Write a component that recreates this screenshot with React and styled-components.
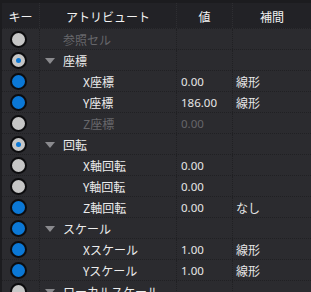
import React from 'react';
import styled, { createGlobalStyle } from 'styled-components';

const GlobalStyle = createGlobalStyle`
	html, body {
		margin: 0;
		padding: 0;
		background: #2b2b2f;
		overflow: hidden;
	}
	body {
		font-family: "Noto Sans CJK JP", "Noto Sans", sans-serif;
		font-size: 12px;
		color: #e6e6e6;
	}
`;

const rows = [
	{ key: 'off', label: '参照セル', level: 0, disabled: true },
	{ key: 'mixed', label: '座標', level: 0, group: true },
	{ key: 'on', label: 'X座標', level: 1, value: '0.00', interp: '線形' },
	{ key: 'on', label: 'Y座標', level: 1, value: '186.00', interp: '線形' },
	{ key: 'off', label: 'Z座標', level: 1, value: '0.00', disabled: true },
	{ key: 'mixed', label: '回転', level: 0, group: true },
	{ key: 'off', label: 'X軸回転', level: 1, value: '0.00' },
	{ key: 'off', label: 'Y軸回転', level: 1, value: '0.00' },
	{ key: 'on', label: 'Z軸回転', level: 1, value: '0.00', interp: 'なし' },
	{ key: 'on', label: 'スケール', level: 0, group: true },
	{ key: 'on', label: 'Xスケール', level: 1, value: '1.00', interp: '線形' },
	{ key: 'on', label: 'Yスケール', level: 1, value: '1.00', interp: '線形' },
	{ key: 'off', label: 'ローカルスケール', level: 0, group: true },
];

export default function App() {
	return (
		<Panel>
			<GlobalStyle />
			<HeaderRow>
				<HeadCell>キー</HeadCell>
				<HeadCell>アトリビュート</HeadCell>
				<HeadCell>値</HeadCell>
				<HeadCell>補間</HeadCell>
			</HeaderRow>
			{rows.map((r, i) => (
				<Row key={i}>
					<KeyCell>
						<KeyDot state={r.key} />
					</KeyCell>
					<AttrCell level={r.level}>
						{r.group ? <Caret /> : <CaretSpace />}
						<Label disabled={r.disabled}>{r.label}</Label>
					</AttrCell>
					<ValueCell disabled={r.disabled}>{r.value}</ValueCell>
					<InterpCell>{r.interp}</InterpCell>
				</Row>
			))}
		</Panel>
	);
}

const Panel = styled.div`
	width: 309px;
	height: 289px;
	border-top: 3px solid #1c1c1f;
	border-left: 2px solid #1c1c1f;
	background: #2b2b2f;
	overflow: hidden;
`;

const Grid = styled.div`
	display: grid;
	grid-template-columns: 38px 137px 56px 78px;
`;

const HeaderRow = styled(Grid)`
	height: 25px;
	background: #222226;
`;

const HeadCell = styled.div`
	display: flex;
	align-items: center;
	justify-content: center;
	color: #f2f2f2;
	padding-top: 1px;
	border-right: 1px dotted #2e2e32;

	&:last-child {
		border-right: none;
	}
`;

const Row = styled(Grid)`
	height: 21px;
	box-sizing: border-box;
	border-top: 1px dotted #202023;
`;

const Cell = styled.div`
	display: flex;
	align-items: center;
	border-right: 1px dotted #202023;
	white-space: nowrap;
	overflow: hidden;
`;

const KeyCell = styled(Cell)`
	justify-content: flex-start;
	padding-left: 8px;
`;

const KeyDot = styled.span`
	box-sizing: border-box;
	width: 17px;
	height: 17px;
	border-radius: 50%;
	border: 2px solid #0c0c0e;
	background: ${p => (p.state === 'on' ? '#0b78d6' : '#c6c6c6')};
	position: relative;

	&::after {
		content: '';
		display: ${p => (p.state === 'mixed' ? 'block' : 'none')};
		position: absolute;
		left: 50%;
		top: 50%;
		width: 5px;
		height: 5px;
		margin: -2.5px 0 0 -2.5px;
		border-radius: 50%;
		background: #0b78d6;
	}
`;

const AttrCell = styled(Cell)`
	padding-left: ${p => (p.level === 1 ? 25 : 5)}px;
`;

const Caret = styled.span`
	flex: none;
	width: 0;
	height: 0;
	border-left: 5px solid transparent;
	border-right: 5px solid transparent;
	border-top: 6px solid #8a8a8e;
	margin-right: 8px;
	margin-top: 1px;
`;

const CaretSpace = styled.span`
	flex: none;
	width: 18px;
`;

const Label = styled.span`
	color: ${p => (p.disabled ? '#67676b' : '#ececec')};
`;

const ValueCell = styled(Cell)`
	padding-left: 4px;
	font-family: "Noto Sans", "Noto Sans CJK JP", sans-serif;
	font-size: 11.5px;
	color: ${p => (p.disabled ? '#66666a' : '#e6e6e6')};
`;

const InterpCell = styled(Cell)`
	padding-left: 3px;
	border-right: none;
`;
